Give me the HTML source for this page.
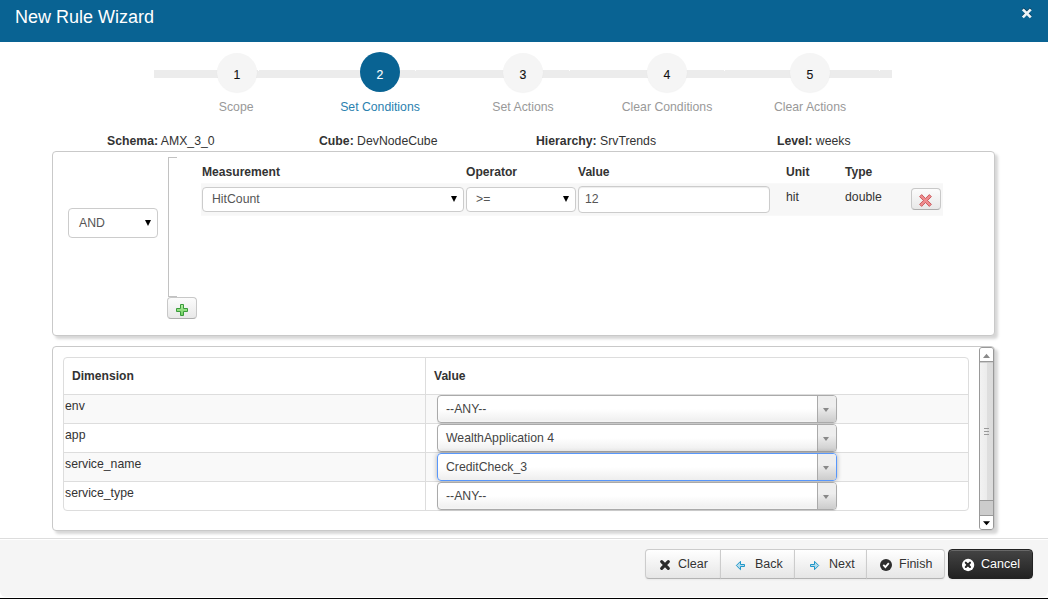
<!DOCTYPE html>
<html>
<head>
<meta charset="utf-8">
<title>New Rule Wizard</title>
<style>
*{box-sizing:border-box;margin:0;padding:0}
html,body{width:1048px;height:599px;overflow:hidden;background:#fff}
body{font-family:"Liberation Sans",sans-serif;font-size:12.25px;line-height:18px;color:#333;position:relative}
.abs{position:absolute}
#hdr{left:0;top:0;width:1048px;height:42px;background:#096393}
#hdr h3{position:absolute;left:15px;top:3.6px;font-size:18px;line-height:26px;font-weight:normal;color:#fff}
#close{left:1021px;top:7px;width:12px;height:13px}
/* wizard */
#bar{left:154px;top:70px;width:738px;height:8px;background:#ececec}
.circ{width:40px;height:39px;border-radius:50%;background:#f5f5f5;top:53px;text-align:center;line-height:18px;font-size:12.25px;color:#111;box-shadow:0 1px 1px rgba(0,0,0,.05)}
.circ span{position:absolute;left:0;width:100%;top:13px;line-height:18px;-webkit-text-stroke:0.12px currentColor}
.circ.on span{top:14px}
.circ.on{background:#096393;color:#fff;width:40px;height:40px;top:52px;box-shadow:none}
.lbl{top:98px;width:140px;text-align:center;font-size:12.25px;color:#999;line-height:18px}
.lbl.on{color:#2b81af}
/* info */
.info{top:132px;line-height:18px;font-size:12.25px;color:#333;white-space:nowrap}
.info b{font-weight:bold}
/* panels */
.panel{left:52px;width:943px;border:1px solid #c9c9c9;border-radius:4px;background:#fff;box-shadow:3px 3px 3px rgba(0,0,0,.16)}
#p1{top:151px;height:185px}
#p2{top:346px;height:185px}
.sel{border:1px solid #ccc;border-radius:4px;background:#fff;color:#555;font-size:12.25px}
.sel span{position:absolute;left:9px;top:50%;margin-top:-10px;line-height:18px}
.sel i{position:absolute;right:6px;top:50%;margin-top:-4px;width:0;height:0;border-left:3.5px solid transparent;border-right:3.5px solid transparent;border-top:6px solid #000}
.th{font-weight:bold;top:163px;line-height:18px;color:#333;font-size:12.1px}
#rowbg{left:201px;top:183px;width:742px;height:33px;background:linear-gradient(#fbfbfb 0,#f7f7f7 1px,#f7f7f7 32px,#fbfbfb 33px)}
/* table */
#tbl{left:63px;top:357px;width:906px;height:154px;border:1px solid #ddd;border-radius:4px;background:#fff}
.tr{left:64px;width:904px;height:29px;border-top:1px solid #ddd}
.tr.odd{background:#f9f9f9}
.td1{left:65px;line-height:18px}
.chz{left:437px;width:400px;height:28px;border:1px solid #aaa;border-radius:4px;background:linear-gradient(to top,#eee 0%,#fff 50%);box-shadow:0 0 3px #fff inset,0 1px 1px rgba(0,0,0,.1);color:#444}
.chz span{position:absolute;left:8px;top:4px;line-height:18px}
.chz div{position:absolute;right:0;top:0;width:19px;height:100%;border-left:1px solid #aaa;border-radius:0 3px 3px 0;background:linear-gradient(to top,#ccc 0%,#eee 60%)}
.chz div i{position:absolute;left:5px;top:11.5px;width:0;height:0;border-left:3.5px solid transparent;border-right:3.5px solid transparent;border-top:4.8px solid #888}
.chz.foc{border-color:#5897fb;box-shadow:0 0 5px rgba(0,0,0,.3)}
/* footer */
#ftr{left:0;top:538px;width:1048px;height:59px;background:#f5f5f5;border-top:1px solid #ddd;box-shadow:inset 0 1px 0 #fff;border-radius:0 0 6px 6px}
#btm{left:0;top:598px;width:1048px;height:1px;background:#000}
.btn{top:549px;height:30px;border:1px solid #ccc;border-bottom-color:#b3b3b3;background:linear-gradient(#fff,#e6e6e6);font-size:12.5px;line-height:20px;color:#333;text-shadow:0 1px 1px rgba(255,255,255,.75);box-shadow:inset 0 1px 0 rgba(255,255,255,.2),0 1px 2px rgba(0,0,0,.05)}
.btn span{position:absolute;top:4px;white-space:nowrap}
.btn svg{position:absolute}
</style>
</head>
<body>
<div id="hdr" class="abs"><h3>New Rule Wizard</h3></div>
<svg id="close" class="abs" viewBox="0 0 12 13"><path d="M1.8 1.4 L9.8 9.4 M9.8 1.4 L1.8 9.4" stroke="#053a57" stroke-width="2.6" fill="none"/><path d="M1.8 2.4 L9.8 10.4 M9.8 2.4 L1.8 10.4" stroke="#eef3f6" stroke-width="2.7" fill="none"/></svg>

<div id="bar" class="abs"></div>
<div class="abs" style="left:258px;top:70px;width:1px;height:1px;background:#fff;box-shadow:157px 0 #fff,311px 0 #fff,466px 0 #fff,621px 0 #fff"></div>
<div class="abs circ" style="left:217px"><span>1</span></div>
<div class="abs circ on" style="left:360px"><span>2</span></div>
<div class="abs circ" style="left:503px"><span>3</span></div>
<div class="abs circ" style="left:647px"><span>4</span></div>
<div class="abs circ" style="left:790px"><span>5</span></div>
<div class="abs lbl" style="left:166.2px">Scope</div>
<div class="abs lbl on" style="left:310px">Set Conditions</div>
<div class="abs lbl" style="left:453px">Set Actions</div>
<div class="abs lbl" style="left:597px">Clear Conditions</div>
<div class="abs lbl" style="left:740px">Clear Actions</div>

<div class="abs info" style="left:107px"><b>Schema:</b> AMX_3_0</div>
<div class="abs info" style="left:319px"><b>Cube:</b> DevNodeCube</div>
<div class="abs info" style="left:536px"><b>Hierarchy:</b> SrvTrends</div>
<div class="abs info" style="left:777px"><b>Level:</b> weeks</div>

<div id="p1" class="abs panel"></div>
<div class="abs sel" style="left:68px;top:208px;width:90px;height:30px"><span style="left:10px;margin-top:-8.6px">AND</span><i style="margin-top:-3px"></i></div>
<div class="abs" style="left:168px;top:157px;width:9px;height:140px;border:1px solid #c2c2c2;border-right:none"></div>
<div class="abs th" style="left:202px">Measurement</div>
<div class="abs th" style="left:466px">Operator</div>
<div class="abs th" style="left:578px">Value</div>
<div class="abs th" style="left:786px">Unit</div>
<div class="abs th" style="left:845px">Type</div>
<div id="rowbg" class="abs"></div>
<div class="abs sel" style="left:202px;top:187px;width:262px;height:25px"><span>HitCount</span><i></i></div>
<div class="abs sel" style="left:466px;top:187px;width:110px;height:25px"><span>&gt;=</span><i></i></div>
<div class="abs sel" style="left:578px;top:186px;width:192px;height:27px;box-shadow:inset 0 1px 1px rgba(0,0,0,.075)"><span style="left:6px">12</span></div>
<div class="abs" style="left:786px;top:188px;line-height:18px">hit</div>
<div class="abs" style="left:845px;top:188px;line-height:18px">double</div>
<div class="abs" id="del" style="left:911px;top:188px;width:30px;height:22px;border:1px solid #c8c8c8;border-bottom-color:#adadad;border-radius:4px;background:linear-gradient(#fcfcfc,#e8e8e8)">
<svg class="abs" style="left:7px;top:5px" width="13" height="13" viewBox="0 0 13 13"><path d="M2.26 0 L6.5 4.24 L10.74 0 L13 2.26 L8.76 6.5 L13 10.74 L10.74 13 L6.5 8.76 L2.26 13 L0 10.74 L4.24 6.5 L0 2.26 Z" fill="#ee8b8e" stroke="#c4474b" stroke-width="0.9" stroke-linejoin="miter" transform="translate(0.6,0.6) scale(0.908)"/></svg>
</div>
<div class="abs" id="add" style="left:167px;top:297px;width:30px;height:22px;border:1px solid #c8c8c8;border-bottom-color:#adadad;border-radius:4px;background:linear-gradient(#fcfcfc,#e8e8e8)">
<svg class="abs" style="left:8px;top:6px" width="12" height="12" viewBox="0 0 12 12"><defs><linearGradient id="gg" x1="0" y1="0" x2="0" y2="1"><stop offset="0" stop-color="#b4f0a0"/><stop offset="1" stop-color="#6fd060"/></linearGradient></defs><path d="M4.5 0.5 H7.5 V4.5 H11.5 V7.5 H7.5 V11.5 H4.5 V7.5 H0.5 V4.5 H4.5 Z" fill="url(#gg)" stroke="#3a9a3c" stroke-width="1"/></svg>
</div>

<div id="p2" class="abs panel"></div>
<div id="tbl" class="abs"></div>
<div class="abs" style="left:425px;top:358px;width:1px;height:152px;background:#ddd"></div>
<div class="abs th" style="left:72px;top:367px">Dimension</div>
<div class="abs th" style="left:434px;top:367px">Value</div>
<div class="abs tr odd" style="top:394px"></div>
<div class="abs tr" style="top:423px"></div>
<div class="abs tr odd" style="top:452px"></div>
<div class="abs tr" style="top:481px;border-radius:0 0 3px 3px"></div>
<div class="abs" style="left:425px;top:394px;width:1px;height:116px;background:#ddd"></div>
<div class="abs td1" style="top:397px">env</div>
<div class="abs td1" style="top:426px">app</div>
<div class="abs td1" style="top:455px">service_name</div>
<div class="abs td1" style="top:484px">service_type</div>
<div class="abs chz" style="top:395px"><span>--ANY--</span><div><i></i></div></div>
<div class="abs chz" style="top:424px"><span>WealthApplication 4</span><div><i></i></div></div>
<div class="abs chz foc" style="top:453px"><span>CreditCheck_3</span><div><i></i></div></div>
<div class="abs chz" style="top:482px"><span>--ANY--</span><div><i></i></div></div>

<!-- scrollbar -->
<div class="abs" id="sb" style="left:979px;top:347px;width:15px;height:183px;border:1px solid #999;border-radius:3px;background:#ccc;overflow:hidden">
<div class="abs" style="left:0;top:0;width:13px;height:14px;background:#fff;border-bottom:1px solid #999"></div>
<svg class="abs" style="left:0;top:0" width="13" height="14" viewBox="0 0 13 14"><path d="M3 10 L6.5 5.7 L10 10 Z" fill="#8a8a8a"/></svg>
<div class="abs" style="left:0;top:15px;width:13px;height:138px;background:linear-gradient(90deg,#f2f2f2 0%,#ececec 50%,#dedede 55%,#dcdcdc 100%);border-bottom:1px solid #999"></div>
<div class="abs" style="left:4px;top:80px;width:5px;height:1px;background:#999;box-shadow:0 3px 0 #999,0 6px 0 #999"></div>
<div class="abs" style="left:0;top:167px;width:13px;height:14px;background:#fff;border-top:1px solid #999"></div>
<svg class="abs" style="left:0;top:168px" width="13" height="13" viewBox="0 0 13 13"><path d="M3 5.2 L10 5.2 L6.5 9.2 Z" fill="#000"/></svg>
</div>

<div id="ftr" class="abs"></div>
<div id="btm" class="abs"></div>

<div class="abs btn" style="left:645px;width:76px;border-radius:4px 0 0 4px"><span style="left:32px">Clear</span></div>
<div class="abs btn" style="left:720px;width:75px"><span style="left:34px">Back</span></div>
<div class="abs btn" style="left:794px;width:73px"><span style="left:34px">Next</span></div>
<div class="abs btn" style="left:866px;width:79px;border-radius:0 4px 4px 0"><span style="left:32px">Finish</span></div>
<div class="abs btn" style="left:948px;width:85px;border-radius:4px;background:linear-gradient(#444,#222);border-color:#222;color:#fff;text-shadow:0 -1px 0 rgba(0,0,0,.25)"><span style="left:32px">Cancel</span></div>
<!-- icons -->
<svg class="abs" style="left:659px;top:559px" width="12" height="12" viewBox="0 0 12 12"><path d="M2.7 2.7 L9.3 9.3 M9.3 2.7 L2.7 9.3" stroke="#2b2b2b" stroke-width="3.2" stroke-linecap="round" fill="none"/></svg>
<svg class="abs" style="left:735px;top:560px" width="11" height="11" viewBox="0 0 11 11"><path d="M1.3 5.5 L5.5 1.3 L5.5 4.5 L9.5 4.5 L9.5 6.5 L5.5 6.5 L5.5 9.7 Z" fill="#b4dcec" stroke="#1f96c9" stroke-width="1"/></svg>
<svg class="abs" style="left:809px;top:560px" width="11" height="11" viewBox="0 0 11 11"><path d="M9.7 5.5 L5.5 1.3 L5.5 4.5 L1.5 4.5 L1.5 6.5 L5.5 6.5 L5.5 9.7 Z" fill="#b4dcec" stroke="#1f96c9" stroke-width="1"/></svg>
<svg class="abs" style="left:879px;top:558px" width="14" height="14" viewBox="0 0 14 14"><circle cx="7" cy="6.9" r="6" fill="#2d2d2d"/><path d="M4.3 6.9 L6.4 9.1 L9.8 5.1" stroke="#fff" stroke-width="1.8" fill="none"/></svg>
<svg class="abs" style="left:961px;top:558px" width="14" height="14" viewBox="0 0 14 14"><circle cx="7.1" cy="7" r="6.15" fill="#fff"/><path d="M4.8 4.7 L9 8.9 M9 4.7 L4.8 8.9" stroke="#2b2b2b" stroke-width="2.1" stroke-linecap="round" fill="none"/><rect x="5.5" y="5.4" width="2.8" height="2.8" fill="#2b2b2b"/></svg>
</body>
</html>
